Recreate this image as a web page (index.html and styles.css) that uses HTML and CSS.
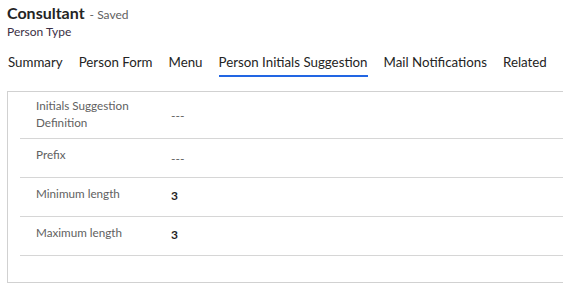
FILE: index.html
```html
<!DOCTYPE html>
<html lang="en">
<head>
  <meta charset="UTF-8">
  <title>Consultant - Person Type</title>
  <link rel="stylesheet" href="styles.css">
</head>
<body>

<div class="header">
  <div class="title-row">
    <span class="title">Consultant</span>
    <span class="saved">- Saved</span>
  </div>
  <div class="entity">Person Type</div>
</div>

<ul class="tabs">
  <li>Summary</li>
  <li>Person Form</li>
  <li>Menu</li>
  <li class="active">Person Initials Suggestion</li>
  <li>Mail Notifications</li>
  <li>Related</li>
</ul>

<div class="section">
  <div class="field field-tall">
    <div class="label">Initials Suggestion<br>Definition</div>
    <div class="value empty">---</div>
  </div>
  <div class="field">
    <div class="label">Prefix</div>
    <div class="value empty">---</div>
  </div>
  <div class="field">
    <div class="label">Minimum length</div>
    <div class="value">3</div>
  </div>
  <div class="field">
    <div class="label">Maximum length</div>
    <div class="value">3</div>
  </div>
</div>

</body>
</html>
```

FILE: styles.css
```css
body {
  font-family: 'Lato', 'Noto Sans', sans-serif;
  background-color: #fff;
  color: #242424;
  margin: 0;
  padding: 0;
  width: 563px;
  overflow: hidden;
}

.header {
  padding: 3px 0 0 7px;
}

.title-row {
  display: flex;
  align-items: baseline;
  gap: 5px;
  line-height: 20px;
}

.title {
  font-size: 16px;
  font-weight: 700;
  color: #242424;
}

.saved {
  font-size: 12px;
  color: #616161;
}

.entity {
  font-size: 12px;
  line-height: 14px;
  color: #3b2f45;
}

.tabs {
  list-style: none;
  display: flex;
  margin: 13px 0 0 0;
  padding: 0 0 0 8px;
  gap: 16px;
}

.tabs li {
  font-size: 13.3px;
  line-height: 20px;
  padding-bottom: 3px;
  border-bottom: 2px solid transparent;
  white-space: nowrap;
}

.tabs li.active {
  border-bottom-color: #2266e3;
}

.section {
  margin: 14px 0 0 7px;
  border: 1px solid #d1d1d1;
  border-right: none;
  height: 190px;
  padding-left: 12px;
}

.field {
  display: flex;
  align-items: center;
  height: 38px;
  border-bottom: 1px solid #d6d6d6;
}

.field-tall {
  height: 46px;
}

.label {
  width: 135px;
  padding-left: 16px;
  font-size: 11.7px;
  line-height: 17px;
  color: #616161;
  align-self: flex-start;
  padding-top: 7px;
}

.field-tall .label {
  padding-top: 5px;
}

.value {
  font-size: 12px;
  font-weight: 700;
  color: #242424;
  padding-bottom: 3px;
}

.value.empty {
  font-weight: 400;
  color: #616161;
  padding-bottom: 0;
}
```
